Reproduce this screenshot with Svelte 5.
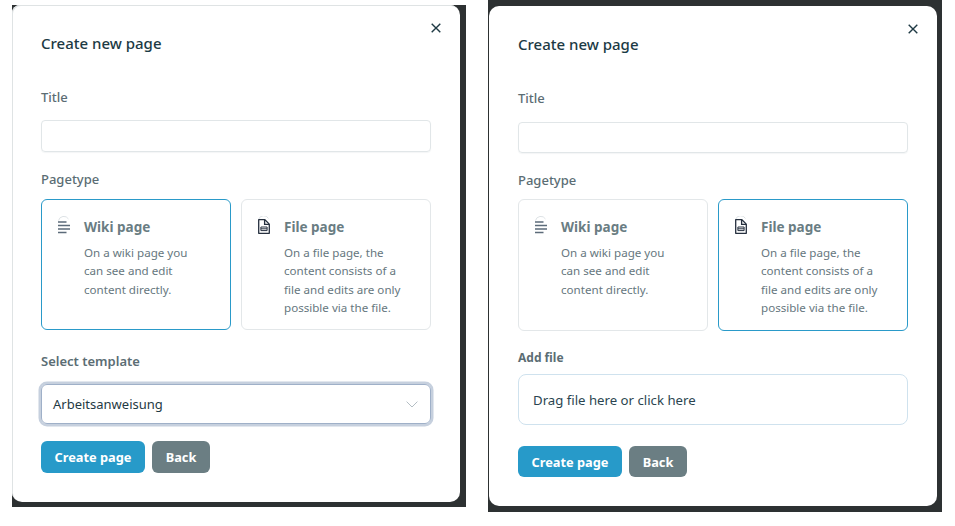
<script lang="ts">
	const pageTypes = [
		{
			id: 'wiki',
			name: 'Wiki page',
			lines: ['On a wiki page you', 'can see and edit', 'content directly.']
		},
		{
			id: 'file',
			name: 'File page',
			lines: ['On a file page, the', 'content consists of a', 'file and edits are only', 'possible via the file.']
		}
	];
</script>

{#snippet typeIcon(id: string)}
	<span class="type-icon">
		{#if id === 'wiki'}
			<svg width="14" height="19" viewBox="0 0 14 19" fill="none" stroke="#5c6b7a" stroke-width="1.3">
				<path d="M1.5 4.5a5.5 5.5 0 0 1 10 -1.5" stroke="#dde2e5" stroke-width="1" />
				<path d="M1 6h8.5M1 9.5h12M1 13h12M1 16.5h8.5" />
			</svg>
		{:else}
			<svg width="14" height="19" viewBox="0 0 14 19" fill="none" stroke="#26303f" stroke-width="1.3">
				<path d="M1.5 3.5a5.5 5.5 0 0 1 10 -1" stroke="#dde2e5" stroke-width="1" />
				<path d="M1.7 3.7h6.2l4.4 4.4v9.2H1.7z" stroke-linejoin="round" />
				<path d="M7.6 3.9v4.5h4.4" />
				<path d="M3.9 11h6.2v3.6H3.9zM3.9 12.8h6.2" stroke-width="1" />
			</svg>
		{/if}
	</span>
{/snippet}

{#snippet header()}
	<button class="close" aria-label="Close">
		<svg width="10" height="10" viewBox="0 0 10 10" stroke="#1f3a44" stroke-width="1.4">
			<path d="M.7.7l8.6 8.6M9.3.7L.7 9.3" />
		</svg>
	</button>
	<h2>Create new page</h2>
{/snippet}

{#snippet cards(selected: string)}
	<div class="cards">
		{#each pageTypes as type}
			<div class="card" class:selected={type.id === selected}>
				{@render typeIcon(type.id)}
				<div>
					<div class="card-name">{type.name}</div>
					{#each type.lines as line}
						<div class="card-line">{line}</div>
					{/each}
				</div>
			</div>
		{/each}
	</div>
{/snippet}

{#snippet buttons()}
	<div class="actions">
		<button class="btn primary">Create page</button>
		<button class="btn secondary">Back</button>
	</div>
{/snippet}

<main class="stage">
	<section class="shot left">
		<div class="modal">
			{@render header()}
			<div class="label title-label">Title</div>
			<div class="input"></div>
			<div class="label type-label">Pagetype</div>
			{@render cards('wiki')}
			<div class="label template-label">Select template</div>
			<div class="select">
				<span>Arbeitsanweisung</span>
				<svg width="12" height="7" viewBox="0 0 12 7" fill="none" stroke="#b4bec4" stroke-width="1">
					<path d="M.6.6L6 6l5.4-5.4" />
				</svg>
			</div>
			{@render buttons()}
		</div>
	</section>

	<section class="shot right">
		<div class="modal">
			{@render header()}
			<div class="label title-label">Title</div>
			<div class="input"></div>
			<div class="label type-label">Pagetype</div>
			{@render cards('file')}
			<div class="label add-label">Add file</div>
			<div class="dropzone">Drag file here or click here</div>
			{@render buttons()}
		</div>
	</section>
</main>

<style>
	:global(body) {
		background: #fff;
		font-family: 'Noto Sans', 'Open Sans', sans-serif;
	}

	.stage {
		display: flex;
		align-items: flex-start;
		gap: 22px;
		padding-left: 12px;
		width: 955px;
		height: 526px;
		box-sizing: border-box;
		overflow: hidden;
	}

	.shot {
		width: 454px;
		background: #2d3132;
		box-sizing: border-box;
	}

	.shot.left {
		margin-top: 5px;
		height: 502px;
		padding-bottom: 5px;
		padding-right: 6px;
	}

	.shot.right {
		height: 512px;
		padding: 6px 5px 6px 1px;
	}

	.modal {
		position: relative;
		height: 100%;
		background: #fff;
		border-radius: 10px;
		padding: 0 29px;
		box-sizing: border-box;
	}

	.left .modal {
		border-top-left-radius: 8px;
		box-shadow: inset 1px 1px #dfe3e4;
	}

	h2 {
		margin: 0;
		padding-top: 28px;
		font-size: 15px;
		line-height: 20px;
		font-weight: 500;
		color: #1c3a44;
	}

	.close {
		position: absolute;
		top: 18px;
		right: 19px;
		padding: 0;
		border: 0;
		background: none;
		display: flex;
	}

	.label {
		font-size: 13px;
		line-height: 18px;
		font-weight: 500;
		color: #5b6d74;
	}

	.title-label {
		margin-top: 35px;
	}

	.input {
		height: 31px;
		margin-top: 15px;
		border: 1px solid #e1e6e8;
		border-radius: 4px;
		box-sizing: border-box;
		box-shadow: 0 1px 1px rgba(40, 60, 70, 0.05);
	}

	.left .input {
		height: 32px;
		margin-top: 14px;
	}

	.type-label {
		margin-top: 18px;
	}

	.cards {
		display: grid;
		grid-template-columns: 190px 190px;
		gap: 10px;
		margin-top: 11px;
	}

	.right .cards {
		margin-top: 10px;
	}

	.card {
		display: flex;
		height: 131px;
		padding: 16px 14px 0 15px;
		gap: 13px;
		border: 1px solid #e3e7e9;
		border-radius: 6px;
		box-sizing: border-box;
	}

	.right .card {
		height: 132px;
	}

	.card.selected {
		border-color: #2a9ac9;
	}

	.type-icon {
		flex: none;
		display: flex;
		width: 14px;
		height: 19px;
	}

	.card-name {
		font-size: 13.5px;
		line-height: 20px;
		font-weight: 700;
		color: #6a7d83;
		margin: 1px 0 7px;
	}

	.card-line {
		font-size: 11.6px;
		line-height: 18.3px;
		color: #66777e;
	}

	.template-label {
		margin-top: 22px;
		font-weight: 600;
	}

	.select {
		display: flex;
		align-items: center;
		justify-content: space-between;
		height: 40px;
		margin-top: 14px;
		padding: 0 12px 0 11px;
		font-size: 13px;
		color: #1f3a44;
		border: 1px solid #9fb0c8;
		border-radius: 6px;
		box-sizing: border-box;
		box-shadow: 0 0 0 2.5px #c6d0de;
	}

	.add-label {
		margin-top: 18px;
		font-size: 12px;
		font-weight: 700;
	}

	.dropzone {
		display: flex;
		align-items: center;
		height: 51px;
		margin-top: 7px;
		padding: 0 14px;
		font-size: 13.2px;
		color: #2b4550;
		border: 1px solid #cfe2ee;
		border-radius: 8px;
		box-sizing: border-box;
	}

	.actions {
		display: flex;
		gap: 7px;
		margin-top: 17px;
	}

	.right .actions {
		margin-top: 21px;
	}

	.btn {
		height: 32px;
		border: 0;
		border-radius: 6px;
		font-family: inherit;
		font-size: 12.8px;
		font-weight: 700;
		color: #fff;
		padding: 0;
	}

	.right .btn {
		height: 31px;
	}

	.primary {
		width: 104px;
		background: #279ac9;
	}

	.secondary {
		width: 58px;
		background: #6b7e83;
	}
</style>
